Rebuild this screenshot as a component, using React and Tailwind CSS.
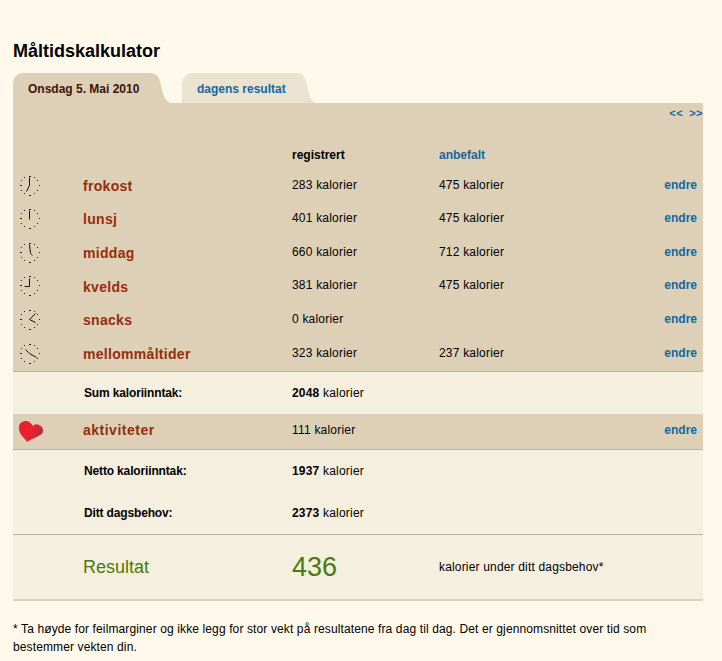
const meals = [
  { name: "frokost", reg: "283", rec: "475", h: [[0, -8], [0, 0], [-3, 6]], rowH: "h-[34px]", up: "mb-[2px]" },
  { name: "lunsj", reg: "401", rec: "475", h: [[0, -8], [0, 1]], rowH: "h-[33px]", up: "mb-[3px]" },
  { name: "middag", reg: "660", rec: "712", h: [[0, -8], [1, 1], [3, 3]], rowH: "h-[34px]", up: "mb-[2px]" },
  { name: "kvelds", reg: "381", rec: "475", h: [[0, -7], [0, 1], [-5, 1]], rowH: "h-[34px]", up: "mb-[4px]" },
  { name: "snacks", reg: "0", rec: "", h: [[6, -6], [0, 0], [6, 3]], rowH: "h-[33px]", up: "mb-[3px]" },
  { name: "mellommåltider", reg: "323", rec: "237", h: [[-4, -4], [0, 0], [7, 4]], rowH: "h-[34px]", up: "mb-[2px]" },
];

const ClockIcon = ({ hands }) => {
  const dots = [];
  for (let i = 0; i < 12; i++) {
    const a = (i * Math.PI) / 6;
    dots.push(
      <rect key={i} x={Math.round(11 + Math.sin(a) * 9.5)} y={Math.round(11 - Math.cos(a) * 9.5)} width={i % 3 === 0 ? 2 : 1} height="1" fill="#222" />,
    );
  }
  return (
    <svg width="22" height="22" viewBox="0 0 22 22" className="block">
      {dots}
      <polyline points={hands.map(([x, y]) => `${11.5 + x},${11.5 + y}`).join(" ")} fill="none" stroke="#111" strokeWidth="1" />
    </svg>
  );
};

const Heart = () => (
  <svg width="24" height="21" viewBox="0 0 24 21" className="block">
    <defs>
      <linearGradient id="heartFill" x1="0" y1="0" x2="1" y2="0.6">
        <stop offset="0" stopColor="#f01f2b" />
        <stop offset="0.6" stopColor="#ea2030" />
        <stop offset="1" stopColor="#a83243" />
      </linearGradient>
    </defs>
    <path d="M8 21 C6 17 0 14 0 7 C0 2 3 0 7 0 C10 0 12 2 14 5 C16 3 18 3 20 4 C23 5 24 7 24 10 C24 15 15 16 8 21 Z" fill="url(#heartFill)" />
  </svg>
);

const Tab = ({ fill, width, children, className }) => (
  <div className={`flex h-[30px] ${className}`}>
    <div className={`${width} rounded-tl-[10px] pt-[7px] pl-[15px] text-[12px] font-bold`} style={{ backgroundColor: fill }}>
      {children}
    </div>
    <svg width="22" height="30" viewBox="0 0 22 30" className="block">
      <path d="M0 0 C5 0 8 2 10 8 C12 15 13 30 22 30 L0 30 Z" fill={fill} />
    </svg>
  </div>
);

const Kcal = ({ n, bold, className = "" }) => (
  <span className={`tracking-[0.2px] ${className}`}>
    {bold ? <b>{n}</b> : n} kalorier
  </span>
);

export default function App() {
  return (
    <div className="min-h-[661px] bg-[#fff9ec] px-[13px] pt-[41px] text-[12px] text-black" style={{ fontFamily: '"Liberation Sans", Arial, sans-serif' }}>
      <h1 className="h-[21px] text-[18px] leading-[21px] font-bold">Måltidskalkulator</h1>
      <div className="mt-[11px] flex w-[690px]">
        <Tab fill="#ddd0b6" width="w-[137px]" className="text-[#3a1408]">Onsdag 5. Mai 2010</Tab>
        <Tab fill="#ebe3d1" width="w-[114px]" className="ml-[10px] text-[#1467a0]">dagens resultat</Tab>
      </div>

      <div className="w-[690px] bg-[#ddd0b6]">
        <div className="flex h-[20px] justify-end gap-[6px] pt-[4px] text-[11px] leading-[13px] font-bold tracking-[0.5px] text-[#1467a0]">
          <span>&lt;&lt;</span>
          <span>&gt;&gt;</span>
        </div>
        <div className="grid h-[46px] grid-cols-[279px_147px_1fr] items-end pb-[7px] font-bold">
          <span />
          <span className="leading-[14px]">registrert</span>
          <span className="leading-[14px] text-[#1467a0]">anbefalt</span>
        </div>
        {meals.map((m) => (
          <div key={m.name} className={`grid ${m.rowH} grid-cols-[70px_209px_147px_1fr_auto] items-center pr-[6px]`}>
            <div className={`${m.up} pl-[5px]`}><ClockIcon hands={m.h} /></div>
            <span className="text-[14px] font-bold tracking-[0.3px] text-[#962d0b]">{m.name}</span>
            <Kcal n={m.reg} className={m.up} />
            <span className={`${m.up} tracking-[0.2px]`}>{m.rec && `${m.rec} kalorier`}</span>
            <span className={`${m.up} font-bold text-[#1467a0]`}>endre</span>
          </div>
        ))}
      </div>

      <div className="w-[690px] bg-[#f5efe0]">
        <div className="grid h-[43px] grid-cols-[71px_208px_1fr] items-center border-t border-[#b5b5ad]">
          <span />
          <b className="tracking-[-0.15px]">Sum kaloriinntak:</b>
          <Kcal n="2048" bold />
        </div>
        <div className="grid h-[35px] grid-cols-[70px_209px_147px_1fr_auto] items-center bg-[#ddd0b6] pr-[6px]">
          <div className="mb-[1px] pl-[6px]"><Heart /></div>
          <span className="mb-[2px] text-[14px] font-bold tracking-[0.5px] text-[#962d0b]">aktiviteter</span>
          <Kcal n="111" className="mb-[4px]" />
          <span />
          <span className="mb-[4px] font-bold text-[#1467a0]">endre</span>
        </div>
        <div className="grid h-[43px] grid-cols-[71px_208px_1fr] items-center border-t border-[#b5b5ad]">
          <span />
          <b className="tracking-[-0.15px]">Netto kaloriinntak:</b>
          <Kcal n="1937" bold />
        </div>
        <div className="grid h-[42px] grid-cols-[71px_208px_1fr] items-center">
          <span />
          <b className="tracking-[-0.15px]">Ditt dagsbehov:</b>
          <Kcal n="2373" bold />
        </div>
        <div className="grid h-[67px] grid-cols-[70px_209px_147px_1fr] items-center border-t border-b-2 border-t-[#b5b5ad] border-b-[#ddd0b6]">
          <span />
          <span className="text-[18px] text-[#4a7a0c]">Resultat</span>
          <span className="text-[27px] text-[#4a7a0c]">436</span>
          <span className="tracking-[0.17px]">kalorier under ditt dagsbehov*</span>
        </div>
      </div>

      <p className="mt-[19px] w-[690px] leading-[18px] tracking-[0.12px]">
        * Ta høyde for feilmarginer og ikke legg for stor vekt på resultatene fra dag til dag. Det er gjennomsnittet over tid som bestemmer vekten din.
      </p>
    </div>
  );
}
